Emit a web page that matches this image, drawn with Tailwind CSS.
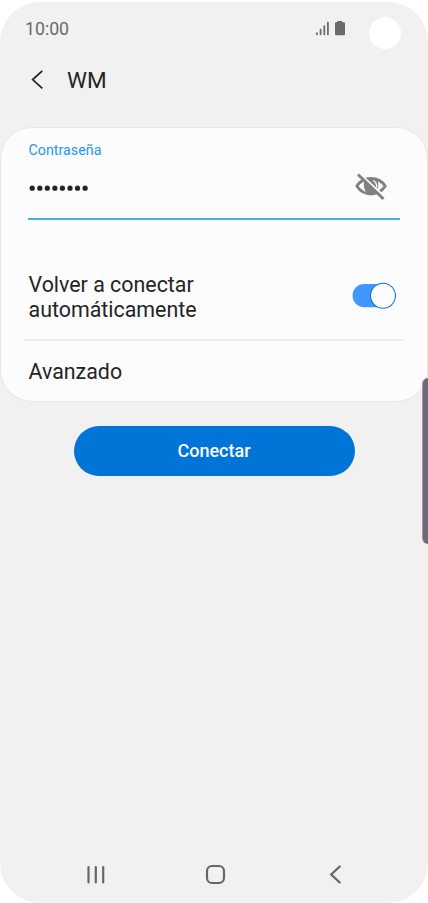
<!DOCTYPE html>
<html lang="es">
<head>
<meta charset="utf-8">
<meta name="viewport" content="width=device-width, initial-scale=1">
<title>WM</title>
<script src="https://cdn.jsdelivr.net/npm/@tailwindcss/browser@4"></script>
</head>
<body class="bg-white font-['Roboto',sans-serif] text-[#252525] overflow-hidden">
<div class="relative pt-[2px] w-[428px] h-[903px]">
<main class="flex flex-col w-full h-[901px] bg-[#f1f1f1] rounded-[40px] overflow-hidden">
  <header class="flex items-center h-[53px] pl-[25px] pr-[27px] text-[#6a6a6a]">
    <span class="text-[17.7px] leading-5">10:00</span>
    <svg class="ml-auto mr-6 w-[29px] h-4" viewBox="316 20.700 29 16" fill="currentColor"><rect x="316" y="32" width="1.8" height="3" rx=".8"/><rect x="319.7" y="28.5" width="1.8" height="6.5" rx=".8"/><rect x="323.4" y="25" width="1.8" height="10" rx=".8"/><rect x="327" y="21.5" width="1.8" height="13.5" rx=".8"/><path d="M337.5 20.7h4.500v1.300h2q1 0 1 1v11q0 1-1 1h-8q-1 0-1-1V23q0-1 1-1h1z"/></svg>
    <span class="size-8 rounded-full bg-white mt-[9px]"></span>
  </header>
  <div class="flex items-center h-[50px] pl-[31px]">
    <svg class="w-3 h-5" viewBox="0 0 12 20" fill="none" stroke="#252525" stroke-width="1.8"><path d="M11.300 .9 1.700 9.600 11.300 18.300"/></svg>
    <h1 class="ml-6 text-[22.5px] leading-7">WM</h1>
  </div>
  <section class="mt-[22px] h-[275px] bg-[#fcfcfc] border border-[#e7e7e7] rounded-[32px]">
    <div class="ml-[27px] mr-[27px] h-[92px] pt-[13px] border-b-2 border-[#4cb0e2]">
      <label class="block pl-[.5px] text-[14.3px] leading-[18px] text-[#2795fb]">Contraseña</label>
      <div class="flex items-center justify-between h-[56px] pr-[13px]">
        <svg class="w-[62px] h-2 mt-[1px]" viewBox="28 183 62 8" fill="#252525"><circle cx="32.200" cy="187.200" r="2.600"/><circle cx="39.800" cy="187.200" r="2.600"/><circle cx="47.300" cy="187.200" r="2.600"/><circle cx="54.900" cy="187.200" r="2.600"/><circle cx="62.400" cy="187.200" r="2.600"/><circle cx="70" cy="187.200" r="2.600"/><circle cx="77.500" cy="187.200" r="2.600"/><circle cx="85.100" cy="187.200" r="2.600"/></svg>
        <svg class="w-8 h-7" viewBox="355 173 32 28"><path d="M356.800 186Q362 178.500 371 178.500T385.300 186Q380 194 371 194T356.800 186Z" fill="none" stroke="#808080" stroke-width="2.800" stroke-linejoin="round"/><path d="M364.500 181Q371 176 377.500 180.500 380 186 376 192 371 195.500 366 192.500 362.500 186 364.500 181Z" fill="#808080"/><path d="M373.500 180.500Q377 183 376.800 187.500" fill="none" stroke="#fcfcfc" stroke-width="1.300"/><path d="M360.500 174.500 385.500 197.500" stroke="#fcfcfc" stroke-width="2.200"/><path d="M358 174.500 383.500 199" stroke="#808080" stroke-width="3"/></svg>
      </div>
    </div>
    <div class="mx-[23px] h-[121px] pt-[52px] pl-[4.500px] pr-2 flex justify-between border-b-2 border-[#eeeeee]">
      <p class="text-[21.400px] leading-[25px]">Volver a conectar<br>automáticamente</p>
      <svg class="w-11 h-[27px] mt-[10px]" viewBox="352 282 44 27"><rect x="352.500" y="284" width="36" height="23.200" rx="11.600" fill="#4297ff"/><circle cx="383" cy="295.700" r="12.500" fill="#fcfcfc" stroke="#0b78d4" stroke-width="1.100"/></svg>
    </div>
    <p class="pl-[27.500px] text-[21.400px] leading-[61px]">Avanzado</p>
  </section>
  <button class="mt-[23.500px] ml-[73.500px] shrink-0 w-[281px] h-[50px] rounded-full bg-[#0074d7] text-[#fcfcfc] font-medium text-[18px]">Conectar</button>
  <nav class="mt-auto mb-[17px] flex items-center pl-[87px] text-[#666]">
    <svg class="w-[18px] h-[22px]" viewBox="87 864 18 22" stroke="currentColor" stroke-width="2.200" stroke-linecap="round"><path d="M88.500 867v15.500M95.800 867v15.500M103.200 867v15.500"/></svg>
    <svg class="ml-[100px] w-[22px] h-[22px]" viewBox="205 864 22 22" fill="none" stroke="currentColor" stroke-width="2.200"><rect x="207" y="866" width="17" height="17" rx="5"/></svg>
    <svg class="ml-[102px] w-3 h-[22px]" viewBox="329 864 12 22" fill="none" stroke="currentColor" stroke-width="2.200" stroke-linecap="round"><path d="M339.700 866.500 331.200 874.500 339.700 882.500"/></svg>
  </nav>
</main>
<div class="absolute left-[422px] top-[378px] w-[6px] h-[166px] rounded-l-[6px] bg-[#6c6979] border-l border-[#9997a1]"></div>
</div>
</body>
</html>
